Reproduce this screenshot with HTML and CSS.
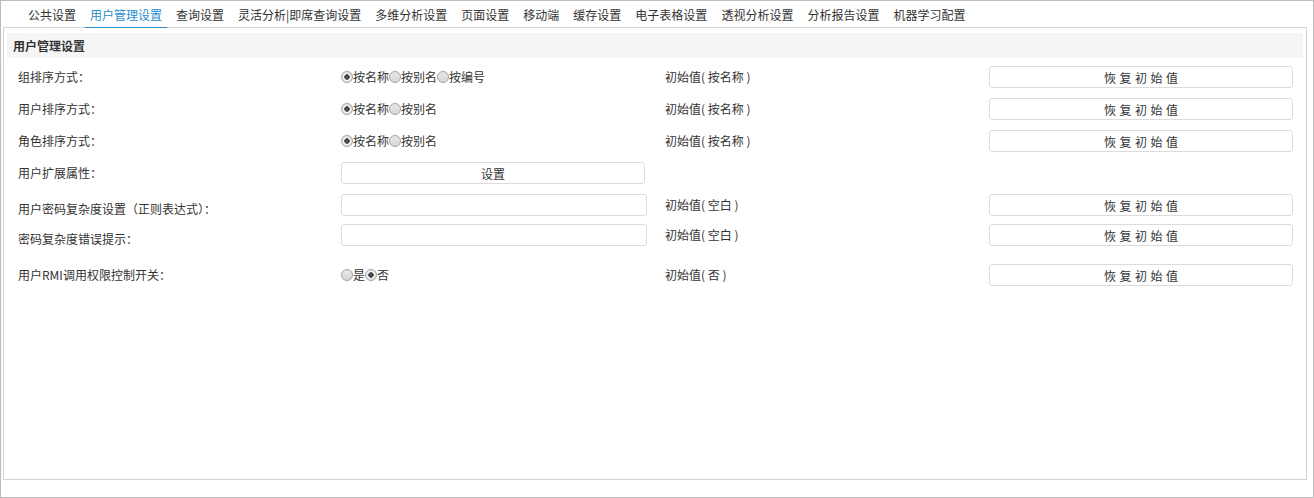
FILE: index.html
```html
<!DOCTYPE html>
<html lang="zh-CN">
<head>
  <meta charset="UTF-8">
  <title>用户管理设置</title>
  <link rel="stylesheet" href="styles.css">
</head>
<body>
  <div class="frame">
    <div class="tabs">
      <span class="tab">公共设置</span>
      <span class="tab active">用户管理设置</span>
      <span class="tab">查询设置</span>
      <span class="tab">灵活分析|即席查询设置</span>
      <span class="tab">多维分析设置</span>
      <span class="tab">页面设置</span>
      <span class="tab">移动端</span>
      <span class="tab">缓存设置</span>
      <span class="tab">电子表格设置</span>
      <span class="tab">透视分析设置</span>
      <span class="tab">分析报告设置</span>
      <span class="tab">机器学习配置</span>
    </div>

    <div class="panel">
      <div class="panel-title">用户管理设置</div>

      <div class="rows">
        <div class="row">
          <div class="cell">组排序方式：</div>
          <div class="cell">
            <label><input type="radio" name="group" checked>按名称</label><label><input type="radio" name="group">按别名</label><label><input type="radio" name="group">按编号</label>
          </div>
          <div class="cell">初始值( 按名称 )</div>
          <div class="cell"><button class="btn reset">恢复初始值</button></div>
        </div>

        <div class="row">
          <div class="cell">用户排序方式：</div>
          <div class="cell">
            <label><input type="radio" name="user" checked>按名称</label><label><input type="radio" name="user">按别名</label>
          </div>
          <div class="cell">初始值( 按名称 )</div>
          <div class="cell"><button class="btn reset">恢复初始值</button></div>
        </div>

        <div class="row">
          <div class="cell">角色排序方式：</div>
          <div class="cell">
            <label><input type="radio" name="role" checked>按名称</label><label><input type="radio" name="role">按别名</label>
          </div>
          <div class="cell">初始值( 按名称 )</div>
          <div class="cell"><button class="btn reset">恢复初始值</button></div>
        </div>

        <div class="row">
          <div class="cell">用户扩展属性：</div>
          <div class="cell"><button class="btn">设置</button></div>
          <div class="cell"></div>
          <div class="cell"></div>
        </div>

        <div class="row short">
          <div class="cell low">用户密码复杂度设置（正则表达式）：</div>
          <div class="cell"><input type="text" class="text"></div>
          <div class="cell">初始值( 空白 )</div>
          <div class="cell"><button class="btn reset">恢复初始值</button></div>
        </div>

        <div class="row tall">
          <div class="cell low">密码复杂度错误提示：</div>
          <div class="cell"><input type="text" class="text"></div>
          <div class="cell">初始值( 空白 )</div>
          <div class="cell"><button class="btn reset">恢复初始值</button></div>
        </div>

        <div class="row">
          <div class="cell">用户RMI调用权限控制开关：</div>
          <div class="cell">
            <label><input type="radio" name="rmi">是</label><label><input type="radio" name="rmi" checked>否</label>
          </div>
          <div class="cell">初始值( 否 )</div>
          <div class="cell"><button class="btn reset">恢复初始值</button></div>
        </div>
      </div>
    </div>
  </div>
</body>
</html>
```

FILE: styles.css
```css
body {
  margin: 0;
  font-family: "Noto Sans CJK SC", "Noto Sans", sans-serif;
  font-size: 12px;
  color: #333;
  background: #fff;
}
.frame {
  width: 1314px;
  height: 498px;
  box-sizing: border-box;
  border: 1px solid #bdbdbd;
  display: flex;
  flex-direction: column;
}
.tabs {
  height: 27px;
  padding-left: 22px;
  display: flex;
  gap: 4px;
}
.tab {
  padding: 1px 5px 0;
  line-height: 25px;
  white-space: nowrap;
}
.tab.active {
  color: #2a8dcc;
  border-bottom: 1px solid #2a8dcc;
  position: relative;
  z-index: 1;
}
.panel {
  flex: 1;
  margin: -1px 6px 17px 2px;
  border: 1px solid #d3d3d3;
  padding: 5px 3px;
}
.panel-title {
  height: 25px;
  line-height: 25px;
  padding-left: 6px;
  background: #f5f5f5;
  font-weight: bold;
}
.rows {
  padding-top: 3px;
}
.row {
  display: grid;
  grid-template-columns: repeat(4, 324px);
  height: 32px;
  padding-top: 5px;
  box-sizing: border-box;
}
.row.short {
  height: 30px;
}
.row.tall {
  height: 40px;
}
.cell {
  padding: 0 10px;
  height: 22px;
  line-height: 22px;
  white-space: nowrap;
}
.cell:first-child {
  padding-left: 11px;
}
.cell.low {
  padding-top: 4px;
}
label {
  display: inline-flex;
  align-items: center;
}
input[type="radio"] {
  appearance: none;
  width: 12px;
  height: 12px;
  margin: 0;
  border: 1px solid #a3a3a3;
  border-radius: 50%;
  background: linear-gradient(#e9e9e9, #d6d6d6);
  box-sizing: border-box;
}
input[type="radio"]:checked {
  background: radial-gradient(circle, #4d4d4d 0, #4d4d4d 2.5px, #f2f2f2 3px, #dcdcdc 6px);
}
.btn {
  width: 100%;
  height: 22px;
  background: #fff;
  border: 1px solid #dcdcdc;
  border-radius: 3px;
  font-family: inherit;
  font-size: 12px;
  color: #333;
  padding: 0;
}
.btn.reset {
  letter-spacing: 3.5px;
  text-indent: 3.5px;
}
.text {
  width: 306px;
  height: 22px;
  box-sizing: border-box;
  border: 1px solid #dcdcdc;
  border-radius: 3px;
  margin: 0;
  vertical-align: top;
}
```
